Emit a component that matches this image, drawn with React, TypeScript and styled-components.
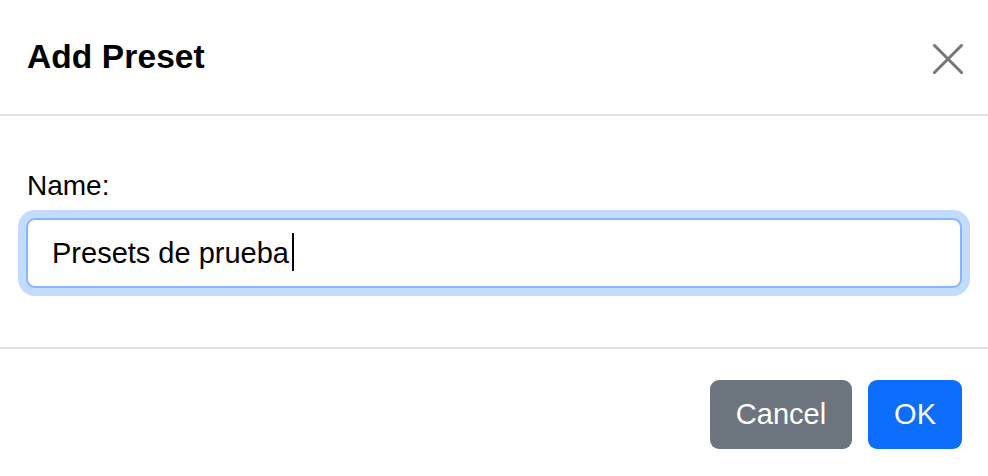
import React from 'react';
import styled, { createGlobalStyle } from 'styled-components';

const GlobalStyle = createGlobalStyle`
  html, body {
    margin: 0;
    padding: 0;
    background: #fff;
  }
  body {
    font-family: "Liberation Sans", Arial, sans-serif;
    color: #212529;
  }
`

const borderColor = "#dee2e6"

const Modal = styled.div`
  width: 988px;
  height: 476px;
  background: #fff;
  display: flex;
  flex-direction: column;
  overflow: hidden;
`

const Header = styled.div`
  display: flex;
  align-items: center;
  justify-content: space-between;
  padding: 0 25px 0 27px;
  border-bottom: 2px solid ${borderColor};
  box-sizing: border-box;
  height: 116px;
`

const Title = styled.h5`
  margin: 0;
  font-size: 33.5px;
  font-weight: 700;
  color: #000;
  letter-spacing: 0.1px;
`

const CloseButton = styled.button`
  width: 30px;
  height: 30px;
  padding: 0;
  border: none;
  background: transparent;
  display: flex;
  margin-top: 4px;
  cursor: pointer;
`

const Body = styled.div`
  padding: 49px 26px 0 26px;
  height: 233px;
  box-sizing: border-box;
  border-bottom: 2px solid ${borderColor};
`

const Label = styled.label`
  display: block;
  font-size: 28px;
  line-height: 42px;
  color: #000;
  padding-left: 1px;
  margin-bottom: 11px;
`

const InputWrap = styled.div`
  position: relative;
`

const TextInput = styled.input`
  display: block;
  width: 100%;
  height: 70px;
  box-sizing: border-box;
  padding: 0 24px;
  font-family: "Liberation Sans", Arial, sans-serif;
  font-size: 29px;
  color: #000;
  border: 2px solid #86b7fe;
  border-radius: 9px;
  outline: none;
  box-shadow: 0 0 0 8px rgba(13, 110, 253, 0.25);
  caret-color: transparent;
`

// blinking text cursor drawn over the field, as in the screenshot
const Caret = styled.span`
  position: absolute;
  left: 266px;
  top: 15px;
  width: 2px;
  height: 38px;
  background: #000;
  pointer-events: none;
`

const Footer = styled.div`
  display: flex;
  justify-content: flex-end;
  gap: 16px;
  padding: 31px 26px 0 0;
`

interface IButton {
  variant: "secondary" | "primary"
}

const Button = styled.button<IButton>`
  height: 69px;
  padding: 0 26px;
  border: none;
  border-radius: 9px;
  font-family: "Liberation Sans", Arial, sans-serif;
  font-size: 29px;
  color: #fff;
  background: ${p => p.variant === "primary" ? "#0d6efd" : "#6c757d"};
  cursor: pointer;
`

const CloseIcon = () => (
  <svg width="30" height="30" viewBox="0 0 30 30">
    <path d="M1.5 1.5 L28.5 28.5 M28.5 1.5 L1.5 28.5" stroke="#777" strokeWidth="3" strokeLinecap="round" />
  </svg>
)

function App() {
  return (
    <>
      <GlobalStyle />
      <Modal>
        <Header>
          <Title>Add Preset</Title>
          <CloseButton aria-label="Close">
            <CloseIcon />
          </CloseButton>
        </Header>
        <Body>
          <Label htmlFor="preset-name">Name:</Label>
          <InputWrap>
            <TextInput id="preset-name" defaultValue="Presets de prueba" />
            <Caret />
          </InputWrap>
        </Body>
        <Footer>
          <Button variant="secondary">Cancel</Button>
          <Button variant="primary">OK</Button>
        </Footer>
      </Modal>
    </>
  );
}

export default App;
